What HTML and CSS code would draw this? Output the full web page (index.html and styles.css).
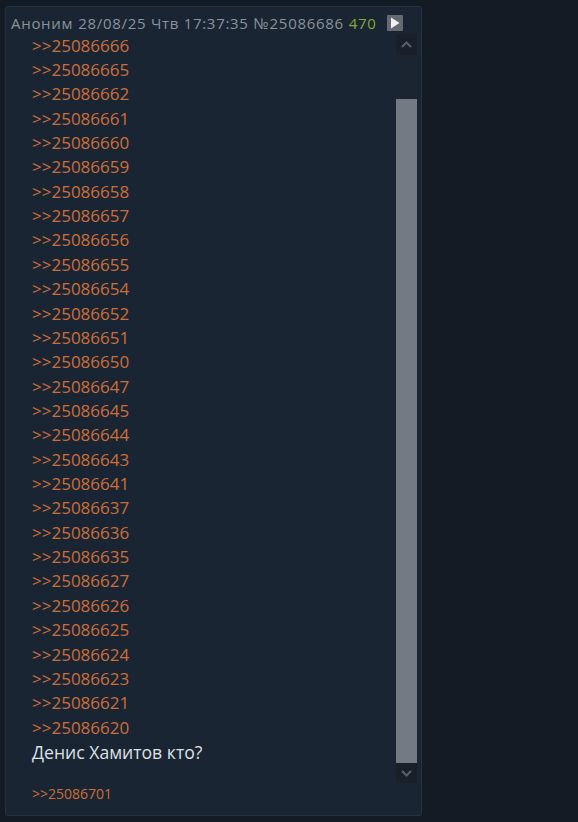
FILE: index.html
```html
<!DOCTYPE html>
<html lang="ru">
<head>
  <meta charset="UTF-8">
  <title>Пост №25086686</title>
  <link rel="stylesheet" href="styles.css">
</head>
<body>
  <div class="post">
    <div class="post-head">
      <span class="name">Аноним</span>
      <span class="date">28/08/25 Чтв 17:37:35</span>
      <span class="num">№25086686</span>
      <span class="count">470</span>
      <span class="play-btn">
        <svg width="10" height="12" viewBox="0 0 10 12"><path d="M1 0.5 L9.5 6 L1 11.5 Z" fill="#f2f2f2"/></svg>
      </span>
    </div>

    <div class="post-body">
      <div class="post-text">
        <a class="reply">&gt;&gt;25086666</a>
        <a class="reply">&gt;&gt;25086665</a>
        <a class="reply">&gt;&gt;25086662</a>
        <a class="reply">&gt;&gt;25086661</a>
        <a class="reply">&gt;&gt;25086660</a>
        <a class="reply">&gt;&gt;25086659</a>
        <a class="reply">&gt;&gt;25086658</a>
        <a class="reply">&gt;&gt;25086657</a>
        <a class="reply">&gt;&gt;25086656</a>
        <a class="reply">&gt;&gt;25086655</a>
        <a class="reply">&gt;&gt;25086654</a>
        <a class="reply">&gt;&gt;25086652</a>
        <a class="reply">&gt;&gt;25086651</a>
        <a class="reply">&gt;&gt;25086650</a>
        <a class="reply">&gt;&gt;25086647</a>
        <a class="reply">&gt;&gt;25086645</a>
        <a class="reply">&gt;&gt;25086644</a>
        <a class="reply">&gt;&gt;25086643</a>
        <a class="reply">&gt;&gt;25086641</a>
        <a class="reply">&gt;&gt;25086637</a>
        <a class="reply">&gt;&gt;25086636</a>
        <a class="reply">&gt;&gt;25086635</a>
        <a class="reply">&gt;&gt;25086627</a>
        <a class="reply">&gt;&gt;25086626</a>
        <a class="reply">&gt;&gt;25086625</a>
        <a class="reply">&gt;&gt;25086624</a>
        <a class="reply">&gt;&gt;25086623</a>
        <a class="reply">&gt;&gt;25086621</a>
        <a class="reply">&gt;&gt;25086620</a>
        <div class="message">Денис Хамитов кто?</div>
      </div>

      <div class="scrollbar">
        <div class="sb-btn">
          <svg width="11" height="7" viewBox="0 0 11 7"><path d="M1 6 L5.5 1.5 L10 6" fill="none" stroke="#56606c" stroke-width="2"/></svg>
        </div>
        <div class="sb-track">
          <div class="sb-thumb"></div>
        </div>
        <div class="sb-btn">
          <svg width="11" height="7" viewBox="0 0 11 7"><path d="M1 1 L5.5 5.5 L10 1" fill="none" stroke="#56606c" stroke-width="2"/></svg>
        </div>
      </div>
    </div>

    <div class="post-replies">
      <a class="reply small">&gt;&gt;25086701</a>
    </div>
  </div>
</body>
</html>
```

FILE: styles.css
```css
body { margin: 0; background: #131b24; font-family: "Open Sans", "Noto Sans", sans-serif; }
.post { box-sizing: border-box; width: 417px; height: 810px; margin: 6px 0 0 5px; background: #1a2533; border: 1px solid #27333f; border-radius: 3px; }

.post-head { display: flex; align-items: center; height: 27px; padding: 4px 0 0 5px; box-sizing: border-box; font-size: 15px; letter-spacing: 0.7px; color: #8a929b; white-space: nowrap; }
.post-head span { margin-right: 5px; }
.count { color: #86a532; }
.play-btn { display: flex; align-items: center; justify-content: center; width: 16px; height: 16px; margin-left: 5px; background: #646a72; border-radius: 1px; }

.post-body { display: flex; height: 749px; }
.post-text { flex: 1; display: flex; flex-direction: column; justify-content: flex-end; overflow: hidden; padding: 0 0 19px 26px; }
.reply { display: block; color: #cd6e39; font-size: 17px; line-height: 24.36px; text-decoration: none; white-space: nowrap; }
.message { color: #dde1e6; font-size: 17.6px; line-height: 24px; }

.scrollbar { display: flex; flex-direction: column; width: 21px; margin-right: 4px; background: #1b2531; }
.sb-btn { display: flex; align-items: center; justify-content: center; height: 21px; background: #18202a; }
.sb-btn:last-child { height: 20px; }
.sb-track { flex: 1; display: flex; flex-direction: column; justify-content: flex-end; }
.sb-thumb { height: 664px; background: #727a83; }

.post-replies { padding: 0 0 0 26px; margin-top: 1px; }
.reply.small { font-size: 14px; line-height: 20px; }
```
